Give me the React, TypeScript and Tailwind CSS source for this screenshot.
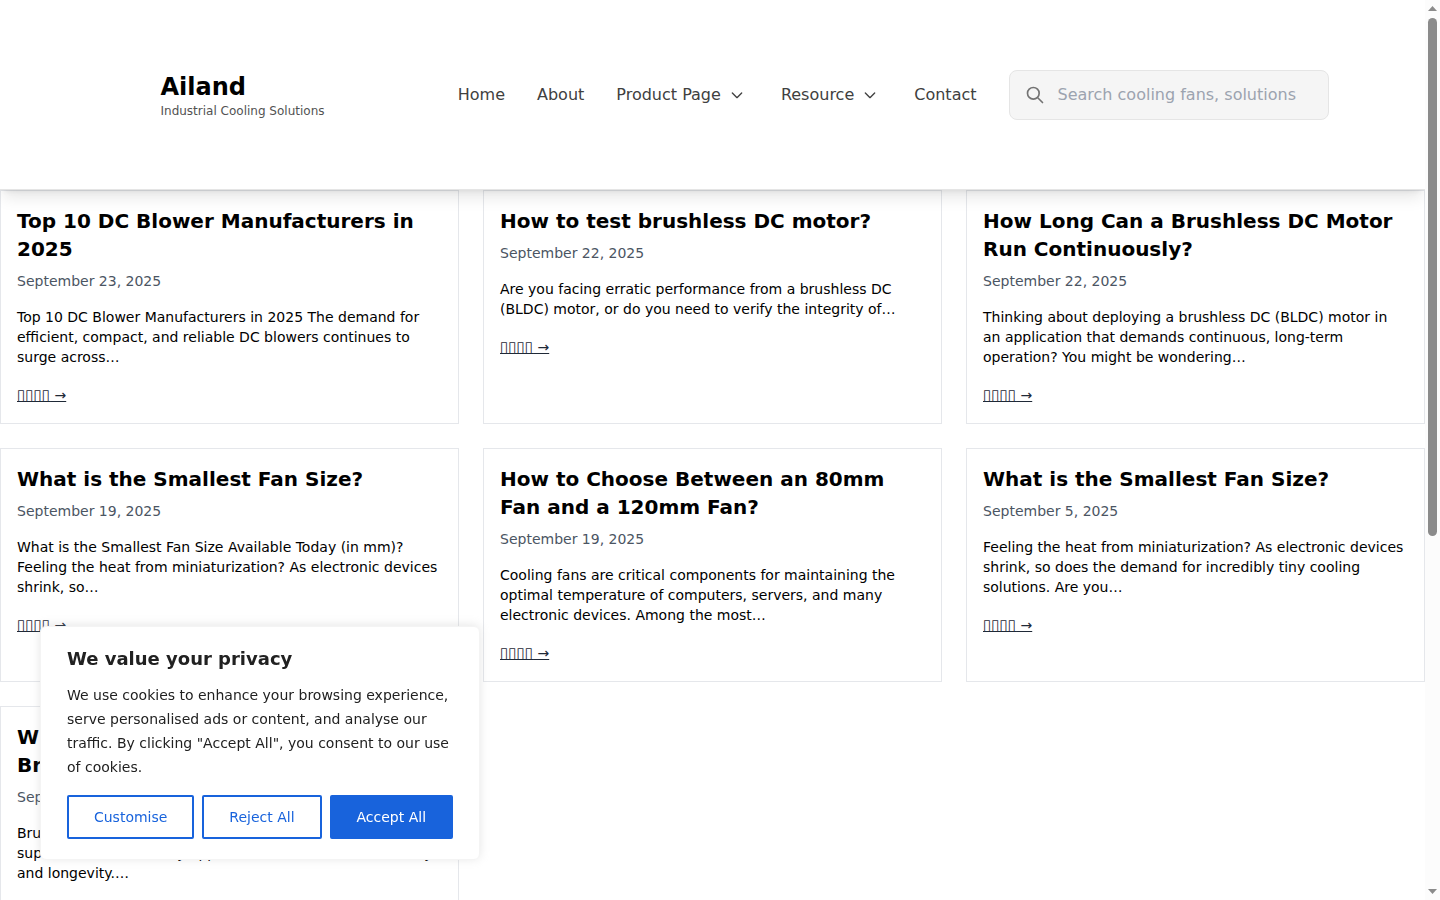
import { useState } from 'react';

interface Post {
  title: string;
  date: string;
  excerpt: string;
}

const navItems = [
  { label: 'Home', hasMenu: false },
  { label: 'About', hasMenu: false },
  { label: 'Product Page', hasMenu: true },
  { label: 'Resource', hasMenu: true },
  { label: 'Contact', hasMenu: false },
];

const posts: Post[] = [
  {
    title: 'Top 10 DC Blower Manufacturers in 2025',
    date: 'September 23, 2025',
    excerpt:
      'Top 10 DC Blower Manufacturers in 2025 The demand for efficient, compact, and reliable DC blowers continues to surge across…',
  },
  {
    title: 'How to test brushless DC motor?',
    date: 'September 22, 2025',
    excerpt:
      'Are you facing erratic performance from a brushless DC (BLDC) motor, or do you need to verify the integrity of…',
  },
  {
    title: 'How Long Can a Brushless DC Motor Run Continuously?',
    date: 'September 22, 2025',
    excerpt:
      'Thinking about deploying a brushless DC (BLDC) motor in an application that demands continuous, long-term operation? You might be wondering…',
  },
  {
    title: 'What is the Smallest Fan Size?',
    date: 'September 19, 2025',
    excerpt:
      'What is the Smallest Fan Size Available Today (in mm)? Feeling the heat from miniaturization? As electronic devices shrink, so…',
  },
  {
    title: 'How to Choose Between an 80mm Fan and a 120mm Fan?',
    date: 'September 19, 2025',
    excerpt:
      'Cooling fans are critical components for maintaining the optimal temperature of computers, servers, and many electronic devices. Among the most…',
  },
  {
    title: 'What is the Smallest Fan Size?',
    date: 'September 5, 2025',
    excerpt:
      'Feeling the heat from miniaturization? As electronic devices shrink, so does the demand for incredibly tiny cooling solutions. Are you…',
  },
  {
    title: 'What is the Average Lifespan of a Brushless DC Motor?',
    date: 'September 5, 2025',
    excerpt:
      'Brushless DC (BLDC) motors are widely known to be the superior choice in many applications due to their efficiency and longevity.…',
  },
];

function ChevronDown() {
  return (
    <svg className="ml-2 mr-1 size-4" viewBox="0 0 24 24" fill="none" stroke="currentColor" strokeWidth={2} aria-hidden="true">
      <path strokeLinecap="round" strokeLinejoin="round" d="M19 9l-7 7-7-7" />
    </svg>
  );
}

function Header() {
  const [query, setQuery] = useState('');

  return (
    <header className="relative z-10 border-b border-[#e5e5e5] bg-white pt-[70px] pb-[69px] pl-16 shadow-lg">
      <div className="mx-auto flex max-w-[1168px] items-center justify-between">
        <a href="#" className="block">
          <span className="block text-2xl font-bold text-black">Ailand</span>
          <span className="block text-xs text-[#525252]">Industrial Cooling Solutions</span>
        </a>

        <div className="flex items-center gap-8">
          <nav className="flex items-center gap-8 text-[#404040]">
            {navItems.map((item) => (
              <a key={item.label} href="#" className="flex items-center whitespace-nowrap">
                {item.label}
                {item.hasMenu && <ChevronDown />}
              </a>
            ))}
          </nav>

          <label className="flex h-[50px] w-80 items-center gap-[13px] rounded-lg border border-[#e5e5e5] bg-[#f5f5f5] px-[15px]">
            <svg className="size-5 shrink-0 text-[#737373]" viewBox="0 0 24 24" fill="none" stroke="currentColor" strokeWidth={2} aria-hidden="true">
              <path strokeLinecap="round" strokeLinejoin="round" d="M21 21l-6-6m2-5a7 7 0 11-14 0 7 7 0 0114 0z" />
            </svg>
            <input
              type="search"
              aria-label="Search"
              value={query}
              onChange={(e) => setQuery(e.target.value)}
              placeholder="Search cooling fans, solutions"
              className="w-full min-w-0 bg-transparent outline-none placeholder:text-[#9ca3af]"
            />
          </label>
        </div>
      </div>
    </header>
  );
}

function PostCard({ post }: { post: Post }) {
  return (
    <article className="border border-[#e5e7eb] p-4">
      <h2 className="text-xl font-bold text-black">{post.title}</h2>
      <p className="mt-2 text-sm text-[#4b5563]">{post.date}</p>
      <p className="mt-4 text-sm text-black">{post.excerpt}</p>
      <div className="mt-4">
        <a href="#" className="text-sm text-[#1f2937] underline [text-decoration-skip-ink:none]">
          <span className="text-[15px]">▯▯▯▯</span> →
        </a>
      </div>
    </article>
  );
}

function CookieBanner() {
  const [open, setOpen] = useState(true);
  if (!open) return null;

  const close = () => setOpen(false);

  return (
    <section
      aria-label="We value your privacy"
      className="fixed bottom-10 left-10 z-20 w-[440px] rounded-md border border-[#f4f4f4] bg-white px-[26px] py-5 text-[#212121] shadow-[0_-1px_10px_0_rgba(172,171,171,0.3)]"
    >
      <h2 className="text-lg leading-6 font-bold">We value your privacy</h2>
      <p className="mt-3 text-sm leading-6">
        We use cookies to enhance your browsing experience, serve personalised ads or content, and analyse our traffic.
        By clicking "Accept All", you consent to our use of cookies.
      </p>
      <div className="mt-4 flex gap-2 text-sm leading-6">
        <button type="button" onClick={close} className="flex-auto rounded-xs border-2 border-[#1863dc] px-6 py-2 text-[#1863dc]">
          Customise
        </button>
        <button type="button" onClick={close} className="flex-auto rounded-xs border-2 border-[#1863dc] px-6 py-2 text-[#1863dc]">
          Reject All
        </button>
        <button type="button" onClick={close} className="flex-auto rounded-xs border-2 border-[#1863dc] bg-[#1863dc] px-6 py-2 text-white">
          Accept All
        </button>
      </div>
    </section>
  );
}

function ScrollTrack() {
  return (
    <div className="flex w-[15px] shrink-0 flex-col items-center bg-[#fcfcfc] py-1.5" aria-hidden="true">
      <svg className="h-[5px] w-[9px] text-[#8b8b8b]" viewBox="0 0 9 5" fill="currentColor">
        <path d="M4.5 0L9 5H0z" />
      </svg>
      <div className="my-[7px] flex w-[9px] flex-1 flex-col">
        <div className="h-3/5 rounded-full bg-[#8b8b8b]" />
      </div>
      <svg className="h-[5px] w-[9px] text-[#8b8b8b]" viewBox="0 0 9 5" fill="currentColor">
        <path d="M0 0h9L4.5 5z" />
      </svg>
    </div>
  );
}

export default function App() {
  return (
    <div className="flex h-screen overflow-hidden bg-white font-['DejaVu_Sans',sans-serif]">
      <div className="min-w-0 flex-1 overflow-hidden">
        <Header />
        <main className="grid grid-cols-3 gap-6">
          {posts.map((post, i) => (
            <PostCard key={i} post={post} />
          ))}
        </main>
      </div>
      <ScrollTrack />
      <CookieBanner />
    </div>
  );
}
